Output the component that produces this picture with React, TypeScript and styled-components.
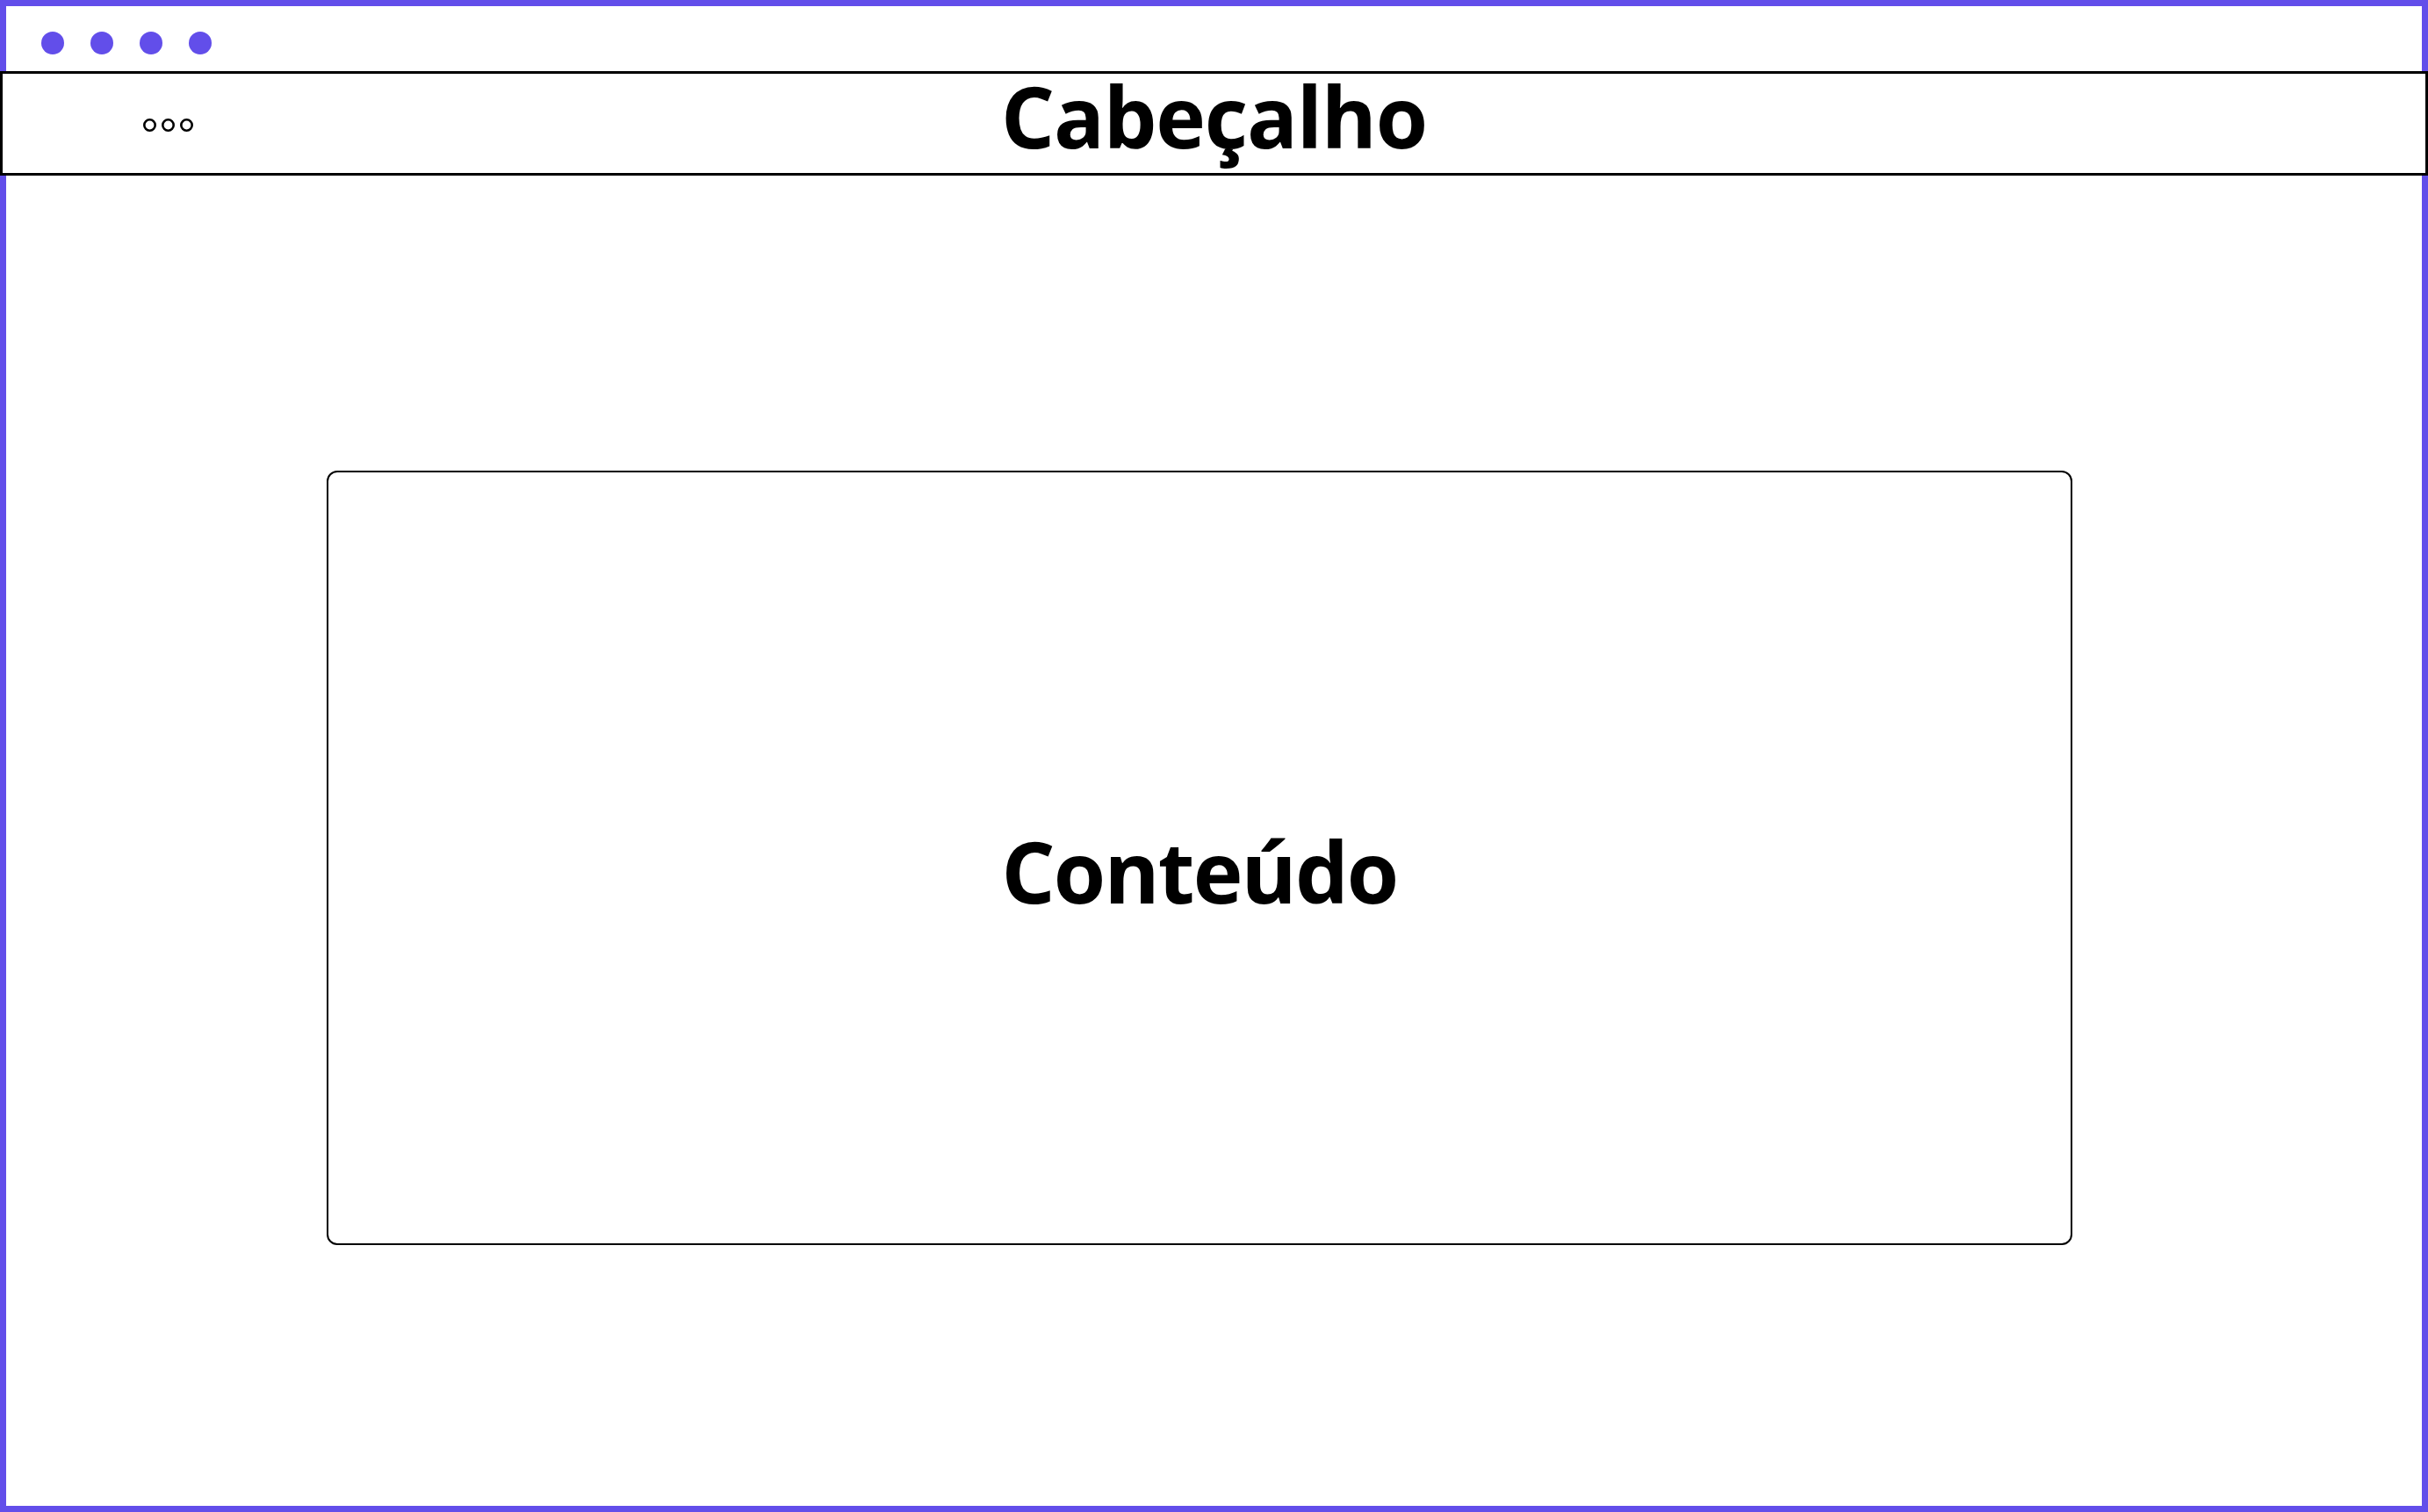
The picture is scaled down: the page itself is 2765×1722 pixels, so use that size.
import React from "react"
import styled, { createGlobalStyle } from "styled-components"

const GlobalStyle = createGlobalStyle`
    html, body {
        margin: 0;
        padding: 0;
        background: #ffffff;
    }
    body {
        font-family: "Open Sans", "Noto Sans", sans-serif;
        color: #000000;
    }
`

const Frame = styled.div`
    width: 2765px;
    height: 1722px;
    box-sizing: border-box;
    border: 7px solid #624eea;
    display: flex;
    flex-direction: column;
`

const DotRow = styled.div`
    display: flex;
    gap: 30px;
    padding: 29px 0 0 40px;
    margin-bottom: 19px;
`

const Dot = styled.span`
    width: 26px;
    height: 26px;
    border-radius: 50%;
    background: #624eea;
`

// header runs over the purple frame on both sides
const Header = styled.header`
    position: relative;
    margin: 0 -7px;
    height: 119px;
    box-sizing: border-box;
    border: 3px solid #000000;
    background: #ffffff;
    display: grid;
    grid-template-columns: 1fr auto 1fr;
    align-items: center;
`

const MenuIcon = styled.svg`
    width: 58px;
    height: 17px;
    display: block;
    margin-left: 160px;
`

const Title = styled.h1`
    margin: 0;
    padding-bottom: 20px;
    font-size: 96px;
    font-weight: 700;
    line-height: 1;
    letter-spacing: -1.2px;
`

const Body = styled.main`
    flex: 1;
    padding: 336px 0 0 365px;
`

const Card = styled.section`
    width: 1988px;
    height: 882px;
    box-sizing: border-box;
    border: 2px solid #000000;
    border-radius: 12px;
    display: flex;
    align-items: center;
    justify-content: center;
    padding-top: 30px;
`

const CardText = styled.h2`
    margin: 0;
    font-size: 96px;
    font-weight: 700;
    line-height: 1;
    letter-spacing: -1.8px;
`

export default function App() {
    return (
        <>
            <GlobalStyle />
            <Frame>
                <DotRow>
                    <Dot />
                    <Dot />
                    <Dot />
                    <Dot />
                </DotRow>
                <Header>
                    <MenuIcon viewBox="0 0 58 17" fill="none" stroke="#000" strokeWidth="2.6">
                        <circle cx="7.5" cy="8.5" r="6.2" />
                        <circle cx="28.5" cy="8.5" r="6.2" />
                        <circle cx="49.5" cy="8.5" r="6.2" />
                    </MenuIcon>
                    <Title>Cabeçalho</Title>
                    <span />
                </Header>
                <Body>
                    <Card>
                        <CardText>Conteúdo</CardText>
                    </Card>
                </Body>
            </Frame>
        </>
    )
}
